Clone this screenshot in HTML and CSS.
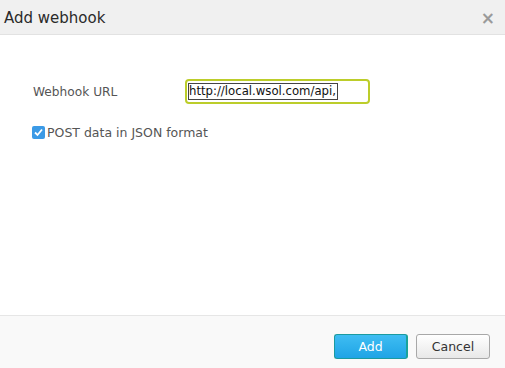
FILE: index.html
```html
<!DOCTYPE html>
<html lang="en">
<head>
  <meta charset="UTF-8">
  <title>Add webhook</title>
  <link rel="stylesheet" href="styles.css">
</head>
<body>
<div class="dialog">
  <!-- En-tête -->
  <div class="dialog-header">
    <span class="dialog-title">Add webhook</span>
    <span class="close">&times;</span>
  </div>

  <!-- Formulaire -->
  <div class="dialog-body">
    <div class="form-row">
      <label class="form-label">Webhook URL</label>
      <div class="url-input"><span class="url-text">http://local.wsol.com/api,</span></div>
    </div>
    <div class="check-row">
      <span class="checkbox">
        <svg width="11" height="11" viewBox="0 0 11 11"><path d="M2 5.5 L4.5 8 L9 2.5" fill="none" stroke="#fff" stroke-width="1.8"/></svg>
      </span>
      <span>POST data in JSON format</span>
    </div>
  </div>

  <!-- Boutons -->
  <div class="dialog-footer">
    <button class="btn btn-primary">Add</button>
    <button class="btn">Cancel</button>
  </div>
</div>
</body>
</html>
```

FILE: styles.css
```css
/* Style global */
body {
  margin: 0;
  font-family: "DejaVu Sans", Verdana, sans-serif;
  background-color: #ffffff;
  color: #333;
}

.dialog {
  width: 505px;
  height: 368px;
  display: flex;
  flex-direction: column;
}

/* En-tête */
.dialog-header {
  height: 35px;
  background-color: #f0f0f0;
  border-bottom: 1px solid #e2e2e2;
  display: flex;
  align-items: center;
  justify-content: space-between;
  padding: 2px 10px 0 4px;
  box-sizing: border-box;
}

.dialog-title {
  font-size: 15px;
  color: #2a2a2a;
}

.close {
  font-size: 17px;
  color: #9a9a9a;
  font-weight: bold;
}

/* Formulaire */
.dialog-body {
  flex: 1;
  padding: 44px 0 0 32px;
  font-size: 12.5px;
  color: #555;
}

.form-row {
  display: flex;
  align-items: center;
}

.form-label {
  width: 152px;
  padding-left: 1px;
  font-size: 12.2px;
}

.url-input {
  width: 185px;
  height: 25px;
  box-sizing: border-box;
  border: 2px solid #bccd2a;
  border-radius: 4px;
  display: flex;
  align-items: center;
  padding-left: 2px;
}

.url-text {
  font-size: 11.7px;
  color: #111;
  outline: 1px solid #444;
  line-height: 15px;
  padding-right: 1px;
}

.check-row {
  display: flex;
  align-items: center;
  margin-top: 21px;
  gap: 2px;
}

.checkbox {
  width: 13px;
  height: 13px;
  background-color: #3b9ae6;
  border-radius: 2px;
  display: flex;
  align-items: center;
  justify-content: center;
}

/* Boutons */
.dialog-footer {
  height: 53px;
  background-color: #f9f9f9;
  border-top: 1px solid #e6e6e6;
  display: flex;
  justify-content: flex-end;
  align-items: center;
  gap: 8px;
  padding-right: 15px;
  box-sizing: border-box;
}

.btn {
  width: 74px;
  height: 25px;
  font-family: "DejaVu Sans", Verdana, sans-serif;
  font-size: 12.5px;
  border: 1px solid #a8a8a8;
  border-radius: 3px;
  background: linear-gradient(#ffffff, #e8e8e8);
  color: #333;
  margin-top: 8px;
}

.btn-primary {
  background: linear-gradient(#3fbdf2, #1fa4e6);
  border-color: #1b9aa0;
  border-right: 2px solid #1aa39a;
  color: #ffffff;
}
```
